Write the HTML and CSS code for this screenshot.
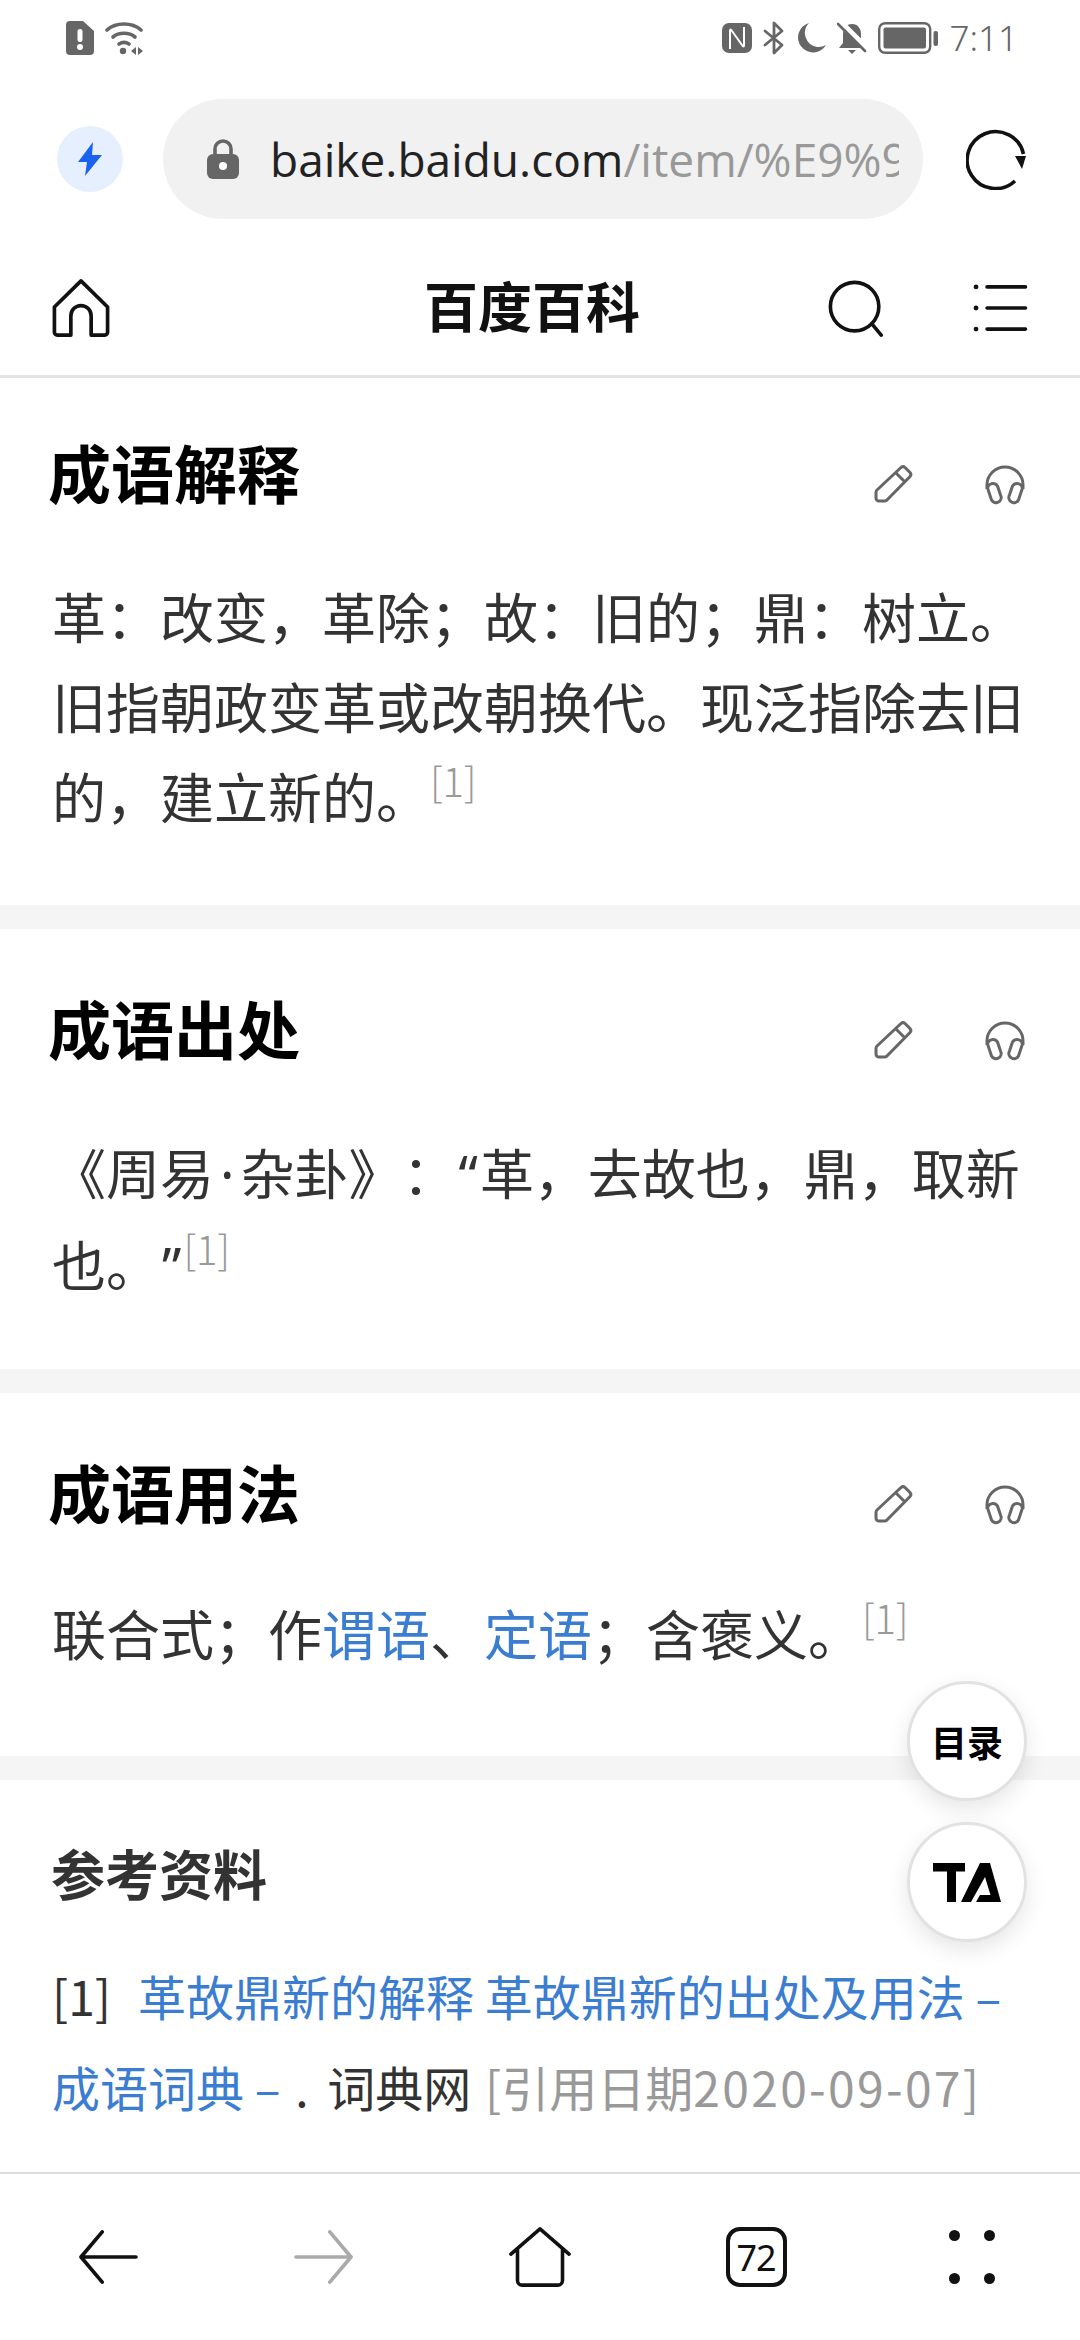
FILE: index.html
```html
<!DOCTYPE html>
<html lang="zh-CN">
<head>
    <meta charset="UTF-8">
    <title>百度百科</title>
    <meta name="viewport" content="width=device-width,initial-scale=1">
    <link rel="stylesheet" href="styles.css">
</head>
<body>
    <div class="phone">
        <!-- status bar -->
        <div class="status">
            <div class="status-left">
                <svg width="28" height="34" viewBox="0 0 28 34"><path d="M4 0h13l11 10v20a4 4 0 0 1-4 4H4a4 4 0 0 1-4-4V4a4 4 0 0 1 4-4z" fill="#666"/><rect x="11.5" y="8" width="5" height="13" rx="2.5" fill="#fff"/><circle cx="14" cy="26" r="3" fill="#fff"/></svg>
                <svg width="38" height="34" viewBox="0 0 38 34"><g fill="none" stroke="#666" stroke-width="3.6" stroke-linecap="round"><path d="M2 9c9-8 25-8 34 0"/><path d="M8 16c6-5 16-5 22 0"/><path d="M14 23c3-2 7-2 10 0"/></g><circle cx="18" cy="30" r="3.2" fill="#666"/><path d="M31 26v8l-5-4zM33 26v8l5-4z" fill="#666"/></svg>
            </div>
            <div class="status-right">
                <svg width="30" height="30" viewBox="0 0 30 30"><rect width="30" height="30" rx="7" fill="#666"/><path d="M8 26V8q0-3 2 0l10 14M22 4v18q0 3-2 0L10 8" fill="none" stroke="#fff" stroke-width="2"/></svg>
                <svg width="22" height="34" viewBox="0 0 22 34"><path d="M2 10l17 14-8 8V2l8 8L2 24" fill="none" stroke="#666" stroke-width="2.8" stroke-linejoin="round" stroke-linecap="round"/></svg>
                <svg width="30" height="30" viewBox="0 0 30 30"><path d="M13 0A15 15 0 1 0 30 22 14 14 0 0 1 13 0z" fill="#666"/></svg>
                <svg width="30" height="32" viewBox="0 0 30 32"><path d="M15 2c6 0 9 5 9 10v9l4 5H2l4-5v-9c0-5 3-10 9-10z" fill="#666"/><path d="M11 28h8l-4 4z" fill="#666"/><path d="M3 -1l28 28" stroke="#fff" stroke-width="5"/><path d="M1 2l27 27" stroke="#666" stroke-width="2.6" stroke-linecap="round"/></svg>
                <svg class="battery" width="60" height="32" viewBox="0 0 60 32"><rect x="1.2" y="1.2" width="51" height="29.600" rx="6" fill="none" stroke="#666" stroke-width="2.4"/><rect x="5.5" y="5.5" width="42.500" height="21" rx="2" fill="#666"/><rect x="55.500" y="9" width="4.500" height="15" rx="2" fill="#666"/></svg>
                <span class="time">7:11</span>
            </div>
        </div>

        <!-- address bar -->
        <div class="addr">
            <div class="speed">
                <svg width="26" height="34" viewBox="0 0 26 34"><path d="M16 0L1 20h9l-2 14L25 13h-10z" fill="#1a63f0"/></svg>
            </div>
            <div class="url">
                <svg width="32" height="40" viewBox="0 0 32 40"><path d="M8 18v-8a8 8 0 0 1 16 0v8" fill="none" stroke="#666" stroke-width="3.600"/><rect y="15" width="32" height="25" rx="6" fill="#666"/><circle cx="16" cy="27" r="4" fill="#fff"/></svg>
                <div class="url-text"><span class="host">baike.baidu.com</span>/item/%E9%9D%A9</div>
            </div>
            <svg class="reload" width="60" height="61" viewBox="0 0 60 61"><path d="M57.500 25A28.500 28.500 0 1 0 49 52" fill="none" stroke="#111" stroke-width="3.600"/><path d="M49 27h11l-4 13z" fill="#111"/></svg>
        </div>

        <!-- site header -->
        <div class="site-head">
            <svg width="58" height="58" viewBox="0 0 60 60"><path d="M30 2L2.500 29v26a3 3 0 0 0 3 3h14V38a10.500 10.500 0 0 1 21 0v20h14a3 3 0 0 0 3-3V29z" fill="none" stroke="#111" stroke-width="3.800" stroke-linejoin="round"/></svg>
            <div class="site-title">百度百科</div>
            <div class="site-tools">
                <svg width="57" height="57" viewBox="0 0 60 60"><circle cx="28" cy="28" r="25.500" fill="none" stroke="#111" stroke-width="3.800"/><path d="M46 46l10 12" stroke="#111" stroke-width="3.800" stroke-linecap="round"/></svg>
                <svg width="55" height="48" viewBox="0 0 56 50"><g stroke="#111" stroke-width="3.800" stroke-linecap="round"><path d="M14 3h40M14 25h40M14 47h40"/></g><g fill="#111"><circle cx="2.500" cy="3" r="2.500"/><circle cx="2.500" cy="25" r="2.500"/><circle cx="2.500" cy="47" r="2.500"/></g></svg>
            </div>
        </div>

        <div class="content">
            <div class="section">
                <div class="sec-head">
                    <h2 class="sec-title">成语解释</h2>
                    <div class="sec-tools">
                        <svg class="ico"><use href="#pencil"/></svg>
                        <svg class="ico"><use href="#phones"/></svg>
                    </div>
                </div>
                <p class="para">革&#xFF1A;改变&#xFF0C;革除&#xFF1B;故&#xFF1A;旧的&#xFF1B;鼎&#xFF1A;树立。旧指朝政变革或改朝换代。现泛指除去旧的&#xFF0C;建立新的。<sup class="ref-mark">[1]</sup></p>
            </div>

            <div class="section section-quote">
                <div class="sec-head">
                    <h2 class="sec-title">成语出处</h2>
                    <div class="sec-tools">
                        <svg class="ico"><use href="#pencil"/></svg>
                        <svg class="ico"><use href="#phones"/></svg>
                    </div>
                </div>
                <p class="para">《周易<span class="narrow dot">·</span>杂卦》&#xFF1A;<span class="narrow quote">“</span>革&#xFF0C;去故也&#xFF0C;鼎&#xFF0C;取新也。<span class="narrow quote">”</span><sup class="ref-mark">[1]</sup></p>
            </div>

            <div class="section section-last">
                <div class="sec-head">
                    <h2 class="sec-title">成语用法</h2>
                    <div class="sec-tools">
                        <svg class="ico"><use href="#pencil"/></svg>
                        <svg class="ico"><use href="#phones"/></svg>
                    </div>
                </div>
                <p class="para">联合式&#xFF1B;作<a class="link">谓语</a>、<a class="link">定语</a>&#xFF1B;含褒义。<sup class="ref-mark">[1]</sup></p>
            </div>

            <div class="refs">
                <h3 class="refs-title">参考资料</h3>
                <p class="ref-item"><span class="ref-num">[1]</span><a class="link">革故鼎新的解释 革故鼎新的出处及用法 – 成语词典 – </a><span class="ref-site">. 词典网</span> <span class="ref-date">[引用日期<span class="digits">2020-09-07</span>]</span></p>
            </div>
        </div>

        <!-- floating buttons -->
        <div class="fab fab-toc">目录</div>
        <div class="fab fab-ta">
            <svg width="68" height="39" viewBox="0 0 68 39"><path d="M0 0h32v8.500H23V39h-9V8.500H0z" fill="#000"/><path d="M47 0H57L68 39H43L47 32H57.500L52 14 38 39H28z" fill="#000"/></svg>
        </div>

        <!-- bottom bar -->
        <div class="bottom">
            <svg width="62" height="54" viewBox="0 0 62 56"><path d="M60 28H3M25 2L3 28l22 26" fill="none" stroke="#111" stroke-width="3.800" stroke-linecap="round" stroke-linejoin="round"/></svg>
            <svg width="62" height="54" viewBox="0 0 62 56"><path d="M2 28h57M37 2l22 26-22 26" fill="none" stroke="#aaa" stroke-width="3.800" stroke-linecap="round" stroke-linejoin="round"/></svg>
            <svg width="64" height="60" viewBox="0 0 66 64"><path d="M2 29L33 2l31 27M9 24v33a5 5 0 0 0 5 5h38a5 5 0 0 0 5-5V24" fill="none" stroke="#111" stroke-width="3.800" stroke-linecap="round" stroke-linejoin="round"/></svg>
            <div class="tabs">72</div>
            <div class="dots"><i></i><i></i><i></i><i></i></div>
        </div>
    </div>

    <svg class="defs" width="0" height="0">
        <symbol id="pencil" viewBox="0 0 42 42"><path d="M29 3.500a3 3 0 0 1 4 0l5 5a3 3 0 0 1 0 4L15 36a3 3 0 0 1-2 1H7a3 3 0 0 1-3-3v-6a3 3 0 0 1 1-2zM24.500 9.500l8.500 8.500" fill="none" stroke="#666" stroke-width="3"/></symbol>
        <symbol id="phones" viewBox="0 0 42 42"><g fill="none" stroke="#666" stroke-width="3"><path d="M3 25v-4a18 18 0 0 1 36 0v4"/><path d="M3.500 24a5.500 5.500 0 0 1 10-2l3 9a5 5 0 0 1-9 5z"/><path d="M38.500 24a5.500 5.500 0 0 0-10-2l-3 9a5 5 0 0 0 9 5z"/></g></symbol>
    </svg>
</body>
</html>
```

FILE: styles.css
```css
html, body {margin:0;padding:0;background:#fff;}
body {font-family:"Noto Sans CJK SC","Noto Sans",sans-serif;color:#333;}
h2, h3, p {margin:0;}
svg {display:block;flex:none;}
.defs {position:absolute;}

.phone {position:relative;width:1080px;height:2340px;overflow:hidden;display:flex;flex-direction:column;}

.status {height:72px;padding:4px 62px 0 66px;box-sizing:border-box;display:flex;align-items:center;justify-content:space-between;}
.status-left, .status-right {display:flex;align-items:center;}
.status-left {gap:11px;}
.status-right {gap:11px;}
.battery {margin-right:1px;}
.time {font-family:"Noto Sans",sans-serif;font-size:35px;line-height:34px;color:#666;font-weight:300;}

.addr {height:147px;padding:27px 0 0 57px;box-sizing:border-box;display:flex;align-items:center;}
.speed {width:66px;height:66px;border-radius:50%;background:#e6effd;display:flex;align-items:center;justify-content:center;margin-right:40px;}
.url {width:760px;height:120px;box-sizing:border-box;border-radius:60px;background:#f1f1f1;display:flex;align-items:center;padding:0 24px 0 44px;}
.url-text {margin-left:31px;font-family:"Open Sans",sans-serif;font-size:46px;color:#999;white-space:nowrap;overflow:hidden;flex:1;}
.url-text .host {color:#222;}
.reload {margin-left:43px;}

.site-head {height:159px;padding:22px 52px 0 52px;box-sizing:border-box;display:flex;align-items:center;justify-content:space-between;border-bottom:3px solid #e4e4e4;position:relative;}
.site-title {position:absolute;left:424px;top:56px;font-size:54px;font-weight:700;color:#111;line-height:60px;}
.site-tools {display:flex;align-items:center;gap:88px;}

.content {flex:1;overflow:hidden;}
.section {padding:56px 52px 64px;border-bottom:24px solid #f5f5f5;}
.section:first-child {padding-top:51px;}
.section-quote {padding-bottom:58px;}
.section-last {padding-bottom:78px;}
.section-last .para {margin-top:55px;}
.sec-head {display:flex;align-items:center;justify-content:space-between;height:84px;}
.sec-title {font-size:63px;font-weight:700;line-height:84px;color:#000;margin-left:-4px;}
.sec-tools {display:flex;gap:70px;padding-top:28px;margin-right:2px;}
.ico {width:42px;height:42px;}
.para {margin-top:58px;font-size:54px;line-height:90px;color:#333;text-spacing-trim:space-all;}
.narrow {font-family:"Noto Sans",sans-serif;}
.dot {margin:0 6px;}
.quote {margin:0 2px;}
.link {color:#3b7dd0;}
.ref-mark {font-size:40px;font-weight:300;color:#999;line-height:0;vertical-align:22px;}

.refs {padding:57px 52px 0;}
.refs-title {font-size:54px;font-weight:700;line-height:72px;color:#333;margin-left:-1px;}
.ref-item {margin-top:41px;font-size:48px;line-height:91px;color:#333;}
.ref-num {display:inline-block;width:86px;}
.ref-site {margin-left:4px;word-spacing:8px;}
.ref-date {margin-left:3px;color:#999;}
.digits {letter-spacing:2.3px;}

.fab {position:absolute;left:907px;width:120px;height:120px;box-sizing:border-box;border-radius:50%;background:#fff;border:3px solid #e2e2e2;box-shadow:0 8px 22px rgba(0,0,0,.1);display:flex;align-items:center;justify-content:center;}
.fab-toc {top:1681px;font-size:36px;font-weight:700;color:#000;}
.fab-ta {top:1822px;}

.bottom {height:168px;flex:none;border-top:2px solid #dcdcdc;box-sizing:border-box;display:grid;grid-template-columns:repeat(5,216px);align-items:center;justify-items:center;}
.tabs {width:61px;height:60px;box-sizing:border-box;border:4px solid #111;border-radius:14px;display:flex;align-items:center;justify-content:center;font-family:"Noto Sans",sans-serif;font-size:36px;letter-spacing:-1px;color:#111;}
.dots {width:46px;display:grid;grid-template-columns:11px 11px;justify-content:space-between;row-gap:32px;}
.dots i {width:11px;height:11px;border-radius:50%;background:#111;display:block;}
```
